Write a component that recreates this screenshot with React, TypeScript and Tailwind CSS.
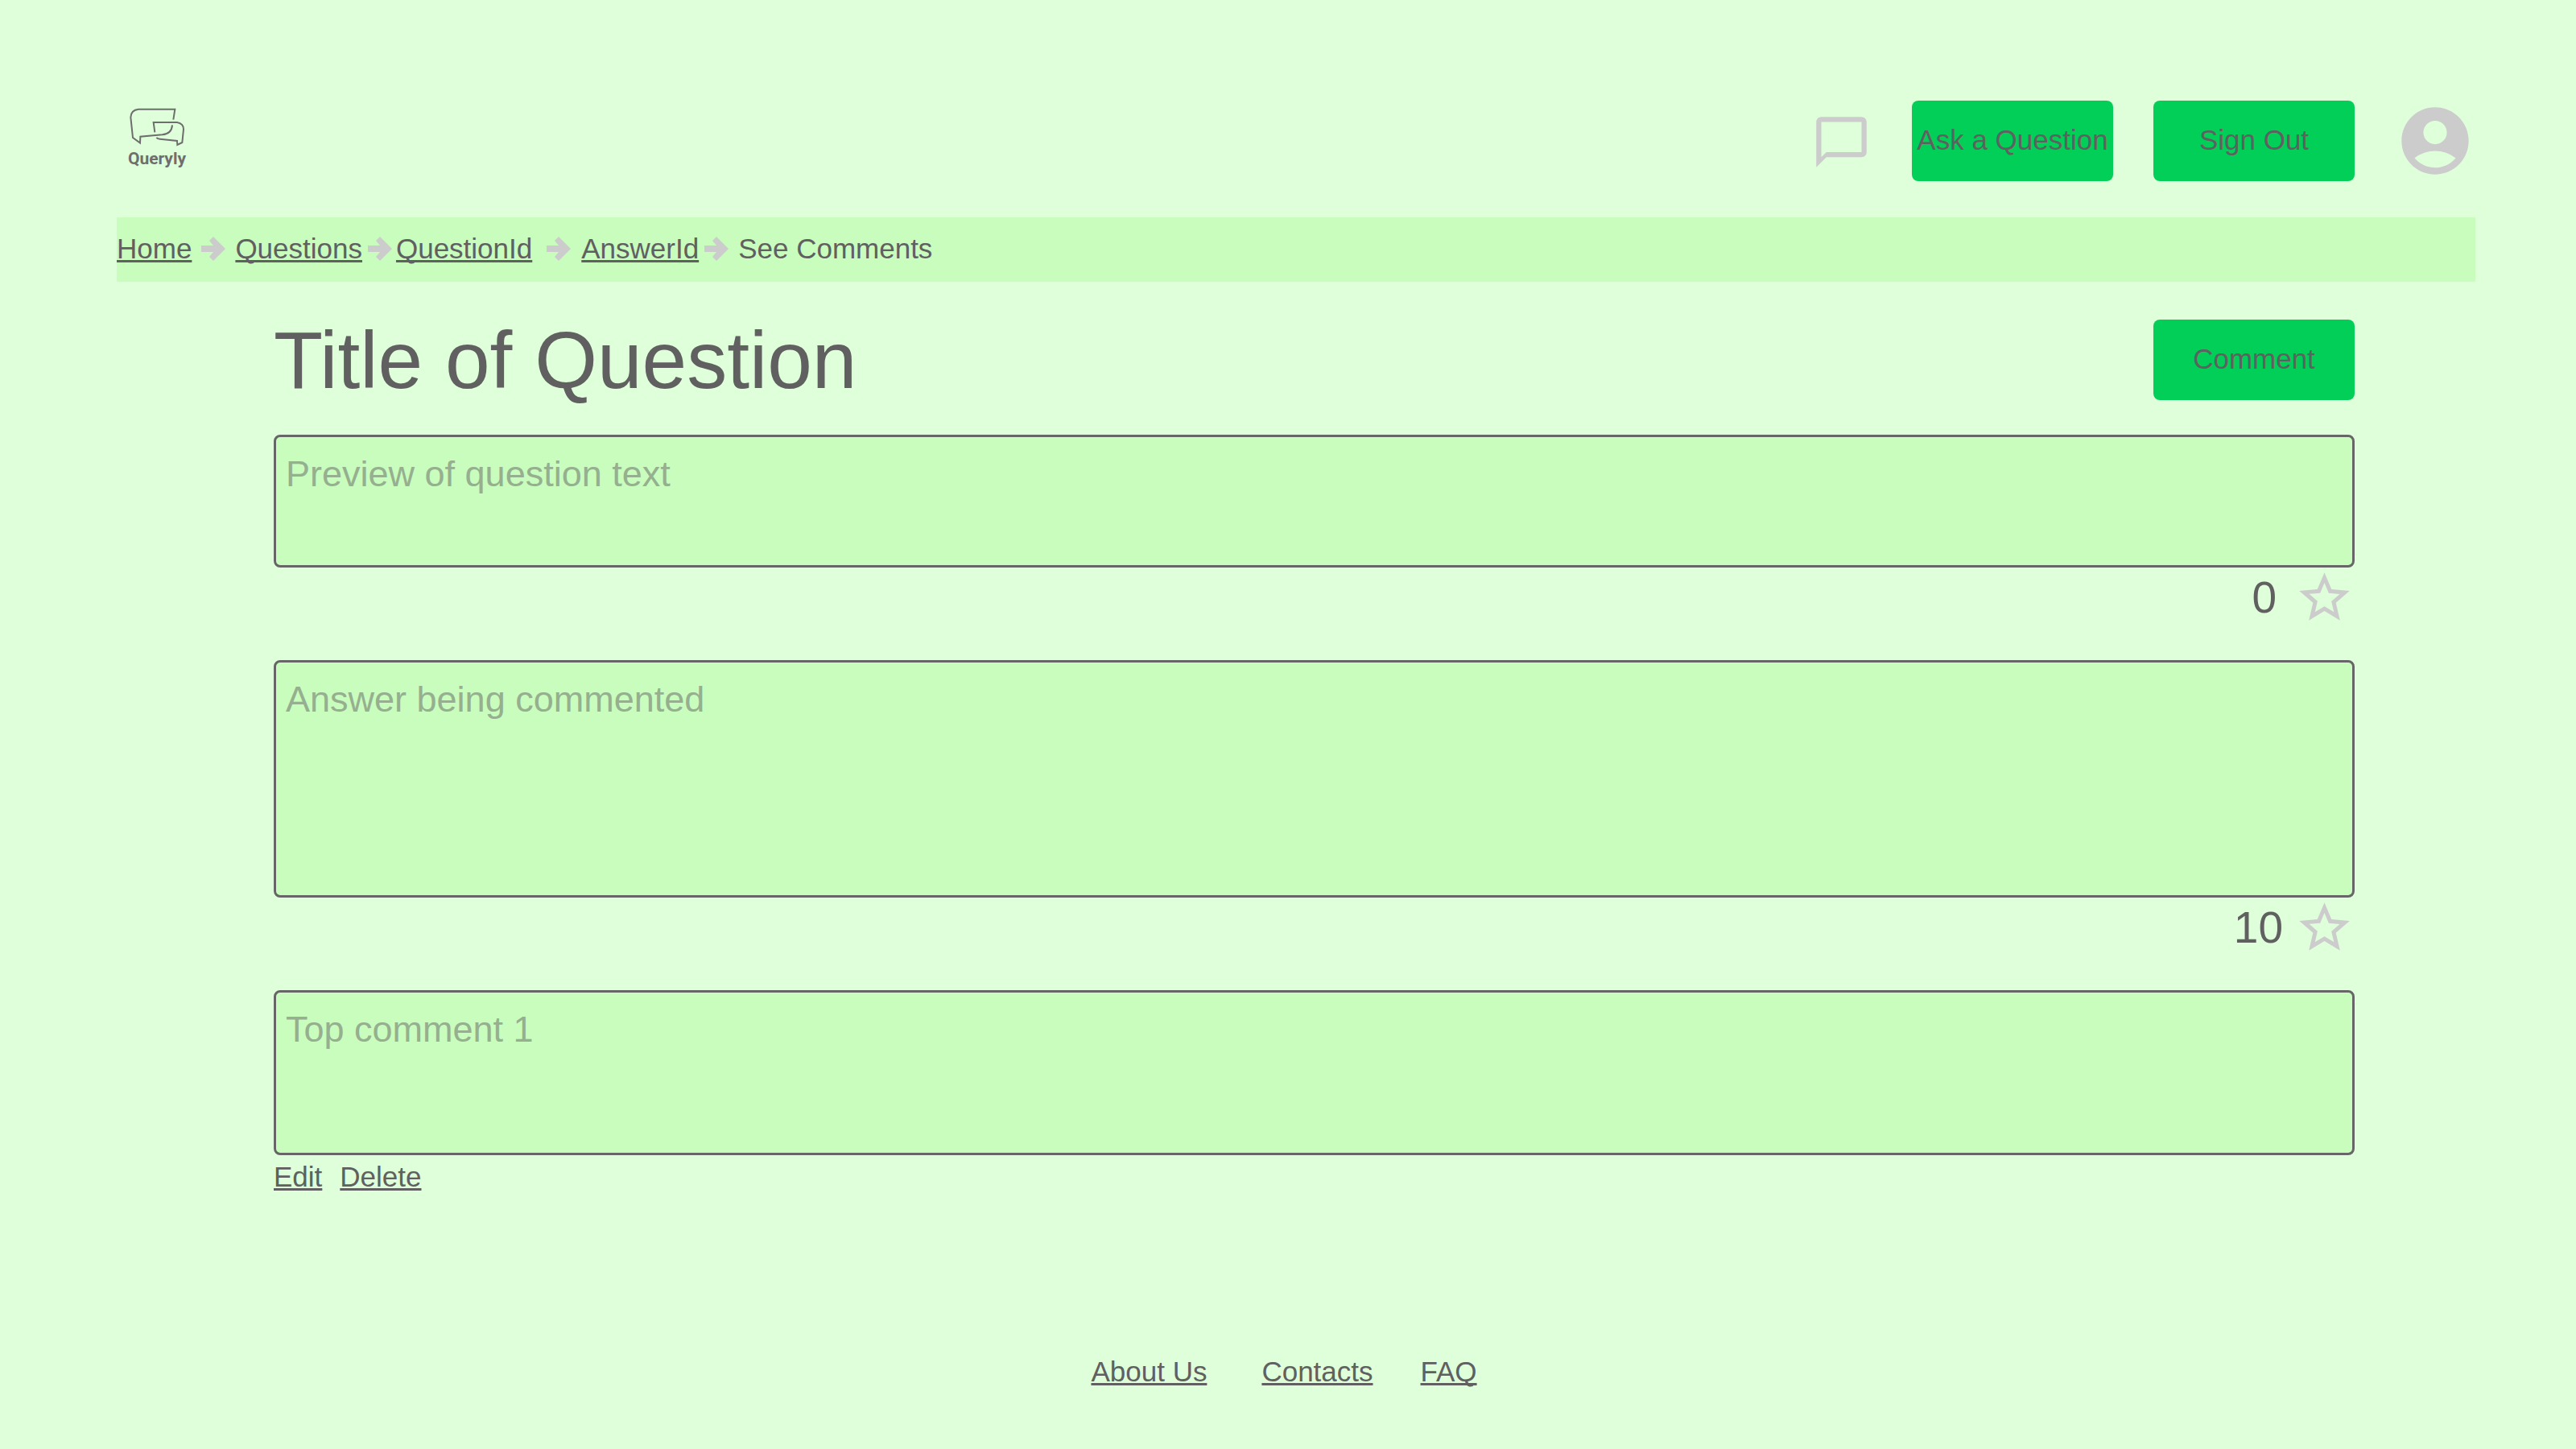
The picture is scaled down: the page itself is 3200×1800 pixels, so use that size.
import { Fragment } from "react";
import { MdAccountCircle, MdChatBubbleOutline, MdStarBorder } from "react-icons/md";

const linkClass = "underline [text-decoration-skip-ink:none]";

const crumbs = [
  { label: "Home", arrow: "mx-3" },
  { label: "Questions", arrow: "ml-[7px] mr-[5px]" },
  { label: "QuestionId", arrow: "ml-[18px] mr-[13px]" },
  { label: "AnswerId", arrow: "ml-[7px] mr-3" },
];

function Logo() {
  return (
    <a href="#" className="flex h-[100px] w-[100px] flex-col items-center pt-2 text-[#6e6e6e]">
      <svg viewBox="90 69 210 147" className="h-[49px] w-[70px]" fill="none" stroke="currentColor" strokeWidth="6" aria-hidden="true">
        <path d="M256 116 L262 77 H126 Q98 80 97 107 L105 183 L132 203 L133 179 L215 172 Q250 168 252 136" />
        <path d="M187 163 L182 126 H270 Q294 130 294 152 L289 201 L271 210 L270 195 L206 188 Q197 187 193 183" />
      </svg>
      <span className="mt-[3px] font-['Roboto',sans-serif] text-[21px] leading-6 font-bold">Queryly</span>
    </a>
  );
}

function Arrow({ className }: { className: string }) {
  return (
    <svg viewBox="0 0 30 30" className={`h-[30px] w-[30px] text-[#cccccc] ${className}`} fill="currentColor" aria-hidden="true">
      <path d="M0 11 H15 L10 5 L15 0 L30 15 L15 30 L10 25 L15 19 H0 Z" />
    </svg>
  );
}

function ActionButton({ label }: { label: string }) {
  return (
    <button type="button" className="h-[100px] w-[250px] shrink-0 rounded-lg bg-[#02cf58] pb-0.5 text-center whitespace-nowrap">
      {label}
    </button>
  );
}

function Post({ label, height }: { label: string; height: string }) {
  return (
    <textarea
      aria-label={label}
      placeholder={label}
      className={`block w-full resize-none rounded-lg border-3 border-[#666666] bg-[#c8fdbe] px-3 py-[19px] text-[45px] leading-[54px] outline-none placeholder:text-[#95af8f] ${height}`}
    />
  );
}

function Votes({ count, gap }: { count: number; gap: string }) {
  return (
    <div className={`mb-10 flex items-center justify-end ${gap}`}>
      <span className="pb-0.5 text-[55px] leading-[66px]">{count}</span>
      <button type="button" aria-label="Star" className="text-[#cccccc]">
        <MdStarBorder className="size-[75px]" />
      </button>
    </div>
  );
}

export default function App() {
  return (
    <div className="min-h-screen bg-[#dfffda] pt-[125px] pr-[125px] pl-[145px] font-['Liberation_Sans',Arial,sans-serif] text-[35px] leading-[42px] text-[#606060]">
      <header className="flex items-center justify-between">
        <Logo />
        <div className="flex items-center gap-[50px]">
          <button type="button" aria-label="Messages" className="pt-0.5 text-[#cccccc]">
            <MdChatBubbleOutline className="size-[75px]" />
          </button>
          <ActionButton label="Ask a Question" />
          <ActionButton label="Sign Out" />
          <button type="button" aria-label="Account" className="text-[#cccccc]">
            <MdAccountCircle className="size-[100px]" />
          </button>
        </div>
      </header>

      <nav aria-label="Breadcrumb" className="mt-[45px] flex h-20 items-center bg-[#c8fdbe] pb-0.5">
        {crumbs.map((crumb) => (
          <Fragment key={crumb.label}>
            <a href="#" className={linkClass}>{crumb.label}</a>
            <Arrow className={crumb.arrow} />
          </Fragment>
        ))}
        <span aria-current="page">See Comments</span>
      </nav>

      <main className="mt-[37px] mr-[150px] ml-[195px]">
        <div className="mb-[33px] flex items-center justify-between">
          <h1 className="text-[100px] leading-[120px]">Title of Question</h1>
          <ActionButton label="Comment" />
        </div>
        <Post label="Preview of question text" height="h-[165px]" />
        <Votes count={0} gap="gap-[22px]" />
        <Post label="Answer being commented" height="h-[295px]" />
        <Votes count={10} gap="gap-[14px]" />
        <Post label="Top comment 1" height="h-[205px]" />
        <div className="mt-1.5 flex gap-[22px]">
          <a href="#" className={linkClass}>Edit</a>
          <a href="#" className={linkClass}>Delete</a>
        </div>
      </main>

      <footer className="mt-[200px] flex justify-center pr-[30px]">
        <a href="#" className={`mr-[68px] ${linkClass}`}>About Us</a>
        <a href="#" className={`mr-[59px] ${linkClass}`}>Contacts</a>
        <a href="#" className={linkClass}>FAQ</a>
      </footer>
    </div>
  );
}
